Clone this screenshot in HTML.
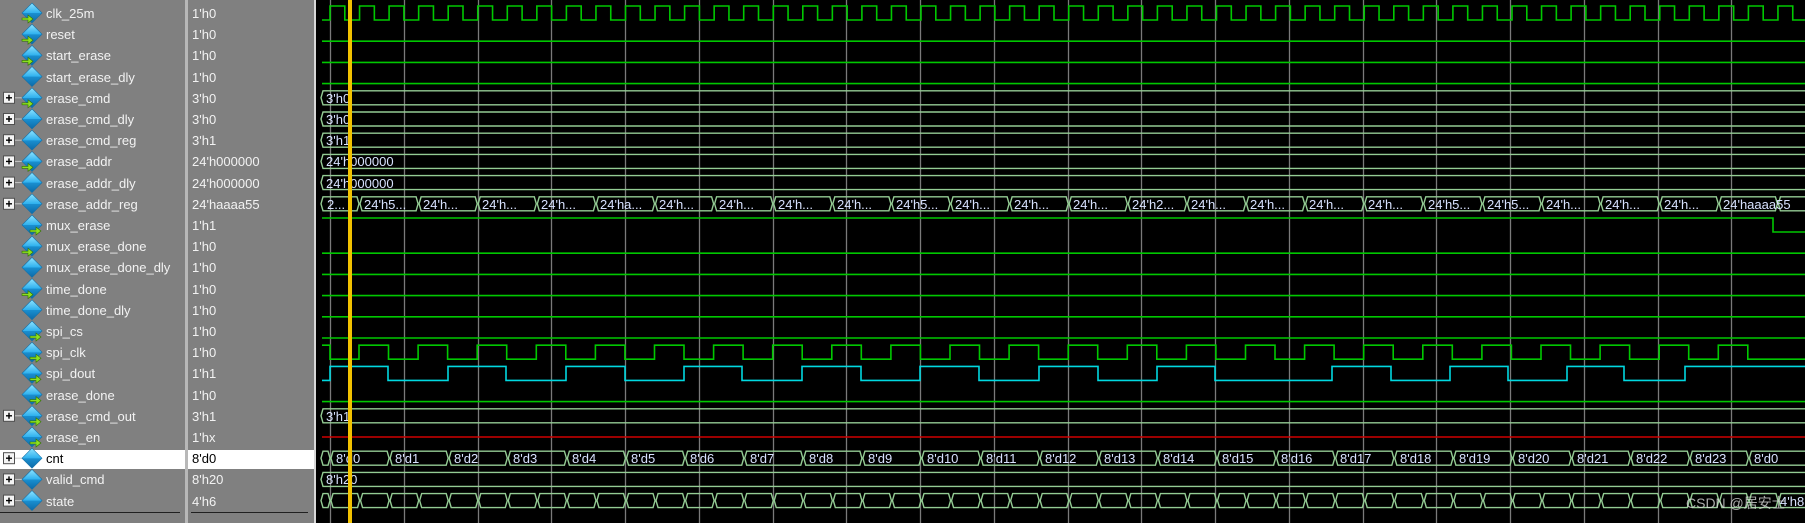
<!DOCTYPE html>
<html><head><meta charset="utf-8"><style>
html,body{margin:0;padding:0;background:#000;overflow:hidden}
svg{display:block}
.n{font-family:"Liberation Sans",Tahoma,sans-serif;font-size:13px;fill:#f2f2f2}
.w{font-family:"Liberation Sans",sans-serif;font-size:13px;fill:#d8e2ff}
</style></head><body>
<svg id="s" width="1805" height="523" xmlns="http://www.w3.org/2000/svg">
<defs>
<linearGradient id="dg" x1="0" y1="0" x2="0" y2="1"><stop offset="0" stop-color="#8fe4ff"/><stop offset="0.5" stop-color="#2eb0ee"/><stop offset="0.51" stop-color="#1a8fd0"/><stop offset="1" stop-color="#0c6aa8"/></linearGradient>
<g id="dia"><polygon points="0,-10 10,0 0,10 -10,0" fill="url(#dg)" stroke="#1470a8" stroke-width="0.6"/></g>
<g id="arr"><path d="M-8,5 h6 v-3 l5,4 l-5,4 v-3 h-6z" fill="#8ce020" stroke="#307000" stroke-width="0.6"/></g>
<g id="plus"><rect x="0.5" y="-5.5" width="11" height="11" fill="#f4f4f4" stroke="#505050"/><path d="M3,0h6M6,-3v6" stroke="#000" stroke-width="1.4"/><path d="M12,0h10" stroke="#c8c8c8"/></g>
</defs>
<rect x="0" y="0" width="314" height="523" fill="#808080"/>
<rect x="185" y="0" width="3" height="523" fill="#b8b8b8"/>
<rect x="314" y="0" width="2" height="523" fill="#d8d8d8"/>
<rect x="0" y="450" width="314" height="19" fill="#ffffff"/>
<rect x="185" y="450" width="3" height="19" fill="#b8b8b8"/>
<line x1="0" y1="512.5" x2="180" y2="512.5" stroke="#202020"/>
<line x1="191" y1="512.5" x2="308" y2="512.5" stroke="#202020"/>
<g id="icons"></g>
<g>
<text class="n" x="46" y="18">clk_25m</text><text class="n" x="192" y="18">1'h0</text>
<text class="n" x="46" y="39">reset</text><text class="n" x="192" y="39">1'h0</text>
<text class="n" x="46" y="60">start_erase</text><text class="n" x="192" y="60">1'h0</text>
<text class="n" x="46" y="82">start_erase_dly</text><text class="n" x="192" y="82">1'h0</text>
<text class="n" x="46" y="103">erase_cmd</text><text class="n" x="192" y="103">3'h0</text>
<text class="n" x="46" y="124">erase_cmd_dly</text><text class="n" x="192" y="124">3'h0</text>
<text class="n" x="46" y="145">erase_cmd_reg</text><text class="n" x="192" y="145">3'h1</text>
<text class="n" x="46" y="166">erase_addr</text><text class="n" x="192" y="166">24'h000000</text>
<text class="n" x="46" y="188">erase_addr_dly</text><text class="n" x="192" y="188">24'h000000</text>
<text class="n" x="46" y="209">erase_addr_reg</text><text class="n" x="192" y="209">24'haaaa55</text>
<text class="n" x="46" y="230">mux_erase</text><text class="n" x="192" y="230">1'h1</text>
<text class="n" x="46" y="251">mux_erase_done</text><text class="n" x="192" y="251">1'h0</text>
<text class="n" x="46" y="272">mux_erase_done_dly</text><text class="n" x="192" y="272">1'h0</text>
<text class="n" x="46" y="294">time_done</text><text class="n" x="192" y="294">1'h0</text>
<text class="n" x="46" y="315">time_done_dly</text><text class="n" x="192" y="315">1'h0</text>
<text class="n" x="46" y="336">spi_cs</text><text class="n" x="192" y="336">1'h0</text>
<text class="n" x="46" y="357">spi_clk</text><text class="n" x="192" y="357">1'h0</text>
<text class="n" x="46" y="378">spi_dout</text><text class="n" x="192" y="378">1'h1</text>
<text class="n" x="46" y="400">erase_done</text><text class="n" x="192" y="400">1'h0</text>
<text class="n" x="46" y="421">erase_cmd_out</text><text class="n" x="192" y="421">3'h1</text>
<text class="n" x="46" y="442">erase_en</text><text class="n" x="192" y="442">1'hx</text>
<text class="n" x="46" y="463" style="fill:#000">cnt</text><text class="n" x="192" y="463" style="fill:#000">8'd0</text>
<text class="n" x="46" y="484">valid_cmd</text><text class="n" x="192" y="484">8'h20</text>
<text class="n" x="46" y="506">state</text><text class="n" x="192" y="506">4'h6</text>
</g>
<g id="grid"></g>
<g id="waves"></g>
<g>
<text class="w" x="326" y="103">3'h0</text>
<text class="w" x="326" y="124">3'h0</text>
<text class="w" x="326" y="145">3'h1</text>
<text class="w" x="326" y="166">24'h000000</text>
<text class="w" x="326" y="188">24'h000000</text>
<text class="w" x="326" y="421">3'h1</text>
<text class="w" x="326" y="484">8'h20</text>
<text class="w" x="327" y="209">2...</text>
<text class="w" x="364" y="209">24'h5...</text>
<text class="w" x="423" y="209">24'h...</text>
<text class="w" x="482" y="209">24'h...</text>
<text class="w" x="541" y="209">24'h...</text>
<text class="w" x="600" y="209">24'ha...</text>
<text class="w" x="659" y="209">24'h...</text>
<text class="w" x="719" y="209">24'h...</text>
<text class="w" x="778" y="209">24'h...</text>
<text class="w" x="837" y="209">24'h...</text>
<text class="w" x="896" y="209">24'h5...</text>
<text class="w" x="955" y="209">24'h...</text>
<text class="w" x="1014" y="209">24'h...</text>
<text class="w" x="1073" y="209">24'h...</text>
<text class="w" x="1132" y="209">24'h2...</text>
<text class="w" x="1191" y="209">24'h...</text>
<text class="w" x="1250" y="209">24'h...</text>
<text class="w" x="1309" y="209">24'h...</text>
<text class="w" x="1368" y="209">24'h...</text>
<text class="w" x="1428" y="209">24'h5...</text>
<text class="w" x="1487" y="209">24'h5...</text>
<text class="w" x="1546" y="209">24'h...</text>
<text class="w" x="1605" y="209">24'h...</text>
<text class="w" x="1664" y="209">24'h...</text>
<text class="w" x="1723" y="209">24'haaaa55</text>
<text class="w" x="336" y="463">8'd0</text>
<text class="w" x="395" y="463">8'd1</text>
<text class="w" x="454" y="463">8'd2</text>
<text class="w" x="513" y="463">8'd3</text>
<text class="w" x="572" y="463">8'd4</text>
<text class="w" x="631" y="463">8'd5</text>
<text class="w" x="690" y="463">8'd6</text>
<text class="w" x="750" y="463">8'd7</text>
<text class="w" x="809" y="463">8'd8</text>
<text class="w" x="868" y="463">8'd9</text>
<text class="w" x="927" y="463">8'd10</text>
<text class="w" x="986" y="463">8'd11</text>
<text class="w" x="1045" y="463">8'd12</text>
<text class="w" x="1104" y="463">8'd13</text>
<text class="w" x="1163" y="463">8'd14</text>
<text class="w" x="1222" y="463">8'd15</text>
<text class="w" x="1281" y="463">8'd16</text>
<text class="w" x="1340" y="463">8'd17</text>
<text class="w" x="1400" y="463">8'd18</text>
<text class="w" x="1459" y="463">8'd19</text>
<text class="w" x="1518" y="463">8'd20</text>
<text class="w" x="1577" y="463">8'd21</text>
<text class="w" x="1636" y="463">8'd22</text>
<text class="w" x="1695" y="463">8'd23</text>
<text class="w" x="1754" y="463">8'd0</text>
<text class="w" x="1780" y="506">4'h8</text>
<text x="1686" y="508" style="font-family:'Liberation Sans','Noto Sans CJK SC',sans-serif;font-size:14px;fill:rgba(215,215,215,0.8)">CSDN @居安士</text>
</g>
<rect x="348" y="0" width="4" height="523" fill="#f2c200"/>
</svg>
<script>
(function(){
var NS="http://www.w3.org/2000/svg";
function el(p,t,a){var e=document.createElementNS(NS,t);for(var k in a)e.setAttribute(k,a[k]);document.getElementById(p).appendChild(e);return e;}
function c(i){return 13+21.2*i;}
var arrows=[0,1,2,4,7,10,11,13,15,16,17,18,19,20];
var plus=[4,5,6,7,8,9,19,21,22,23];
for(var i=0;i<24;i++){
  var y=c(i);
  if(plus.indexOf(i)>=0) el("icons","use",{href:"#plus",x:3,y:y});
  el("icons","use",{href:"#dia",x:32,y:y});
  if(arrows.indexOf(i)>=0){var ax=(i==10||i>=15)?38:30; el("icons","use",{href:"#arr",x:ax,y:y});}
}
for(var x=330;x<1805;x+=73.75) el("grid","line",{x1:Math.round(x)+0.5,y1:0,x2:Math.round(x)+0.5,y2:523,stroke:"#7a7a7a","stroke-width":1.3});
var S=322,E=1805;
function dig(i,highs,col,startHigh){
  var hi=c(i)-7,lo=c(i)+7,d="M"+S+","+(startHigh?hi:lo);
  highs.forEach(function(h){d+=" L"+h[0]+","+lo+" L"+h[0]+","+hi+" L"+h[1]+","+hi+" L"+h[1]+","+lo;});
  d+=" L"+E+","+lo;
  el("waves","path",{d:d,fill:"none",stroke:col||"#00c800","stroke-width":1.6});
}
var h=[];for(var k=0;330+29.55*k<E;k++)h.push([330+29.55*k,Math.min(E,344.8+29.55*k)]);
dig(0,h);
[1,2,3,11,12,13,14,15,18].forEach(function(i){dig(i,[]);});
el("waves","path",{d:"M"+S+","+(c(10)-7)+" L1773,"+(c(10)-7)+" L1773,"+(c(10)+7)+" L"+E+","+(c(10)+7),fill:"none",stroke:"#00c800","stroke-width":1.6});
var d="M"+S+","+(c(16)-7)+" L330,"+(c(16)-7)+" L330,"+(c(16)+7);
for(k=0;k<24;k++){var a=359+59.1*k,b=388.5+59.1*k;d+=" L"+a+","+(c(16)+7)+" L"+a+","+(c(16)-7)+" L"+b+","+(c(16)-7)+" L"+b+","+(c(16)+7);}
d+=" L"+E+","+(c(16)+7);
el("waves","path",{d:d,fill:"none",stroke:"#00c800","stroke-width":1.6});
dig(17,[[330,388],[448,506],[566,625],[684,742],[802,861],[920,979],[1039,1098],[1157,1215],[1332,1391],[1450,1508],[1567,1624],[1685,1806]],"#00d8e0");
el("waves","line",{x1:S,y1:c(20),x2:E,y2:c(20),stroke:"#d00000","stroke-width":1.6});
function bus(i,T){
  var t=c(i)-7,bt=c(i)+7,m=c(i);var pts=[S-2].concat(T).concat([E+3]);
  for(var j=0;j<pts.length-1;j++){var a=pts[j],b=pts[j+1];
    el("waves","path",{d:"M"+(a+1)+","+m+" L"+(a+3)+","+t+" L"+(b-2)+","+t+" L"+b+","+m+" L"+(b-2)+","+bt+" L"+(a+3)+","+bt+" Z",fill:"none",stroke:"#94cc94","stroke-width":1.4});}
}
[4,5,6,7,8,19,22].forEach(function(i){bus(i,[]);});
var T=[];for(k=0;359+59.1*k<E;k++)T.push(359+59.1*k);bus(9,T);
T=[330];for(k=1;330+59.1*k<E;k++)T.push(330+59.1*k);bus(21,T);
T=[330];for(k=1;330+29.55*k<E;k++)T.push(330+29.55*k);bus(23,T);
})();
</script>
</body></html>
